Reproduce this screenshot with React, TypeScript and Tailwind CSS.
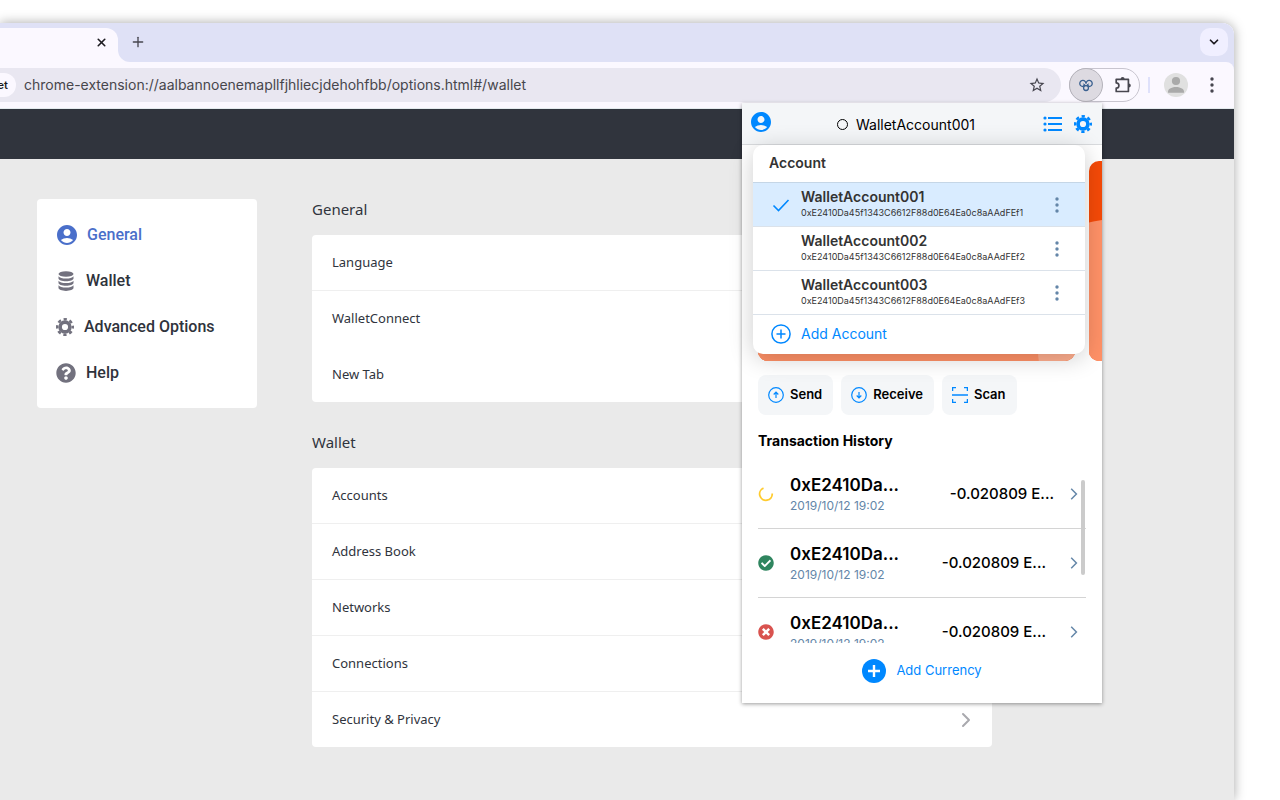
import React from "react";
import { ChevronDown, ChevronRight, Plus, X } from "lucide-react";
import { MdAccountCircle, MdStarOutline } from "react-icons/md";
import { FaCheckCircle, FaQuestionCircle, FaTimesCircle } from "react-icons/fa";

const Gear = () => (
  <svg viewBox="0 0 18 18" className="size-[18px]" fill="none" stroke="currentColor" aria-hidden="true">
    <circle cx="9" cy="9" r="4.9" strokeWidth="3.6" />
    <circle cx="9" cy="9" r="7.8" strokeWidth="2.4" strokeDasharray="3.3 2.826" strokeDashoffset="1.65" />
  </svg>
);

const Coins = () => (
  <svg viewBox="0 0 20 20" className="size-5" fill="currentColor" aria-hidden="true">
    <ellipse cx="10" cy="3" rx="7.5" ry="2.8" />
    <path d="M2.500 5.200c1 1.500 4 2.300 7.500 2.300s6.500-.8 7.500-2.300v2.300c0 1.600-3.300 2.800-7.500 2.800s-7.500-1.200-7.500-2.800z" />
    <path d="M2.500 9.700c1 1.500 4 2.300 7.500 2.300s6.500-.8 7.500-2.300v2.200c0 1.600-3.300 2.800-7.500 2.800s-7.500-1.200-7.500-2.800z" />
    <path d="M2.500 14.200c1 1.500 4 2.300 7.500 2.300s6.500-.8 7.500-2.300v2.900c0 1.600-3.300 2.800-7.500 2.800s-7.500-1.200-7.500-2.800z" />
  </svg>
);

const Dots = ({ className }: { className: string }) => (
  <svg viewBox="0 0 4 16" className={className} fill="currentColor" aria-hidden="true">
    <circle cx="2" cy="2" r="1.7" />
    <circle cx="2" cy="8" r="1.7" />
    <circle cx="2" cy="14" r="1.7" />
  </svg>
);

const menu = [
  { label: "General", icon: <MdAccountCircle size={24} className="-mr-0.5 -ml-px" />, active: true },
  { label: "Wallet", icon: <Coins /> },
  { label: "Advanced Options", icon: <Gear /> },
  { label: "Help", icon: <FaQuestionCircle size={20} /> },
];

const accounts = [
  { name: "WalletAccount001", address: "0xE2410Da45f1343C6612F88d0E64Ea0c8aAAdFEf1", selected: true },
  { name: "WalletAccount002", address: "0xE2410Da45f1343C6612F88d0E64Ea0c8aAAdFEf2" },
  { name: "WalletAccount003", address: "0xE2410Da45f1343C6612F88d0E64Ea0c8aAAdFEf3" },
];

const transactions = ["pending", "success", "failed"];

const CardArt = () => (
  <svg viewBox="0 0 317 200" className="h-[200px] w-[317px] shrink-0 rounded-[10px]" aria-hidden="true">
    <rect width="317" height="200" fill="#f54a08" />
    <circle cx="40" cy="240" r="183" fill="#ff9167" />
    <rect y="150" width="317" height="50" fill="#ff9167" />
    <circle cx="340" cy="190" r="60" fill="#ffae8e" />
  </svg>
);

const TabStrip = () => (
  <div className="flex h-[39px] items-stretch bg-[#dfe1f6]">
    <div className="mt-[5px] flex w-[118px] items-center justify-end rounded-tr-xl bg-[#fbf8ff] pr-2.5 pb-1.5">
      <button aria-label="Close tab" className="text-[#1d1b20]">
        <X size={13} strokeWidth={3} />
      </button>
    </div>
    <div className="flex flex-1 bg-[#fbf8ff]">
      <div className="flex flex-1 items-center justify-between rounded-bl-xl bg-[#dfe1f6] pr-1.5 pb-0.5 pl-3">
        <button aria-label="New tab" className="text-[#47464f]">
          <Plus size={16} strokeWidth={2} />
        </button>
        <button
          aria-label="Search tabs"
          className="flex size-7 items-center justify-center rounded-[10px] bg-[#f0efff] text-[#1d1b20]"
        >
          <ChevronDown size={14} strokeWidth={3} />
        </button>
      </div>
    </div>
  </div>
);

const Toolbar = () => (
  <div className="bg-[#dfe1f6]">
    <div className="flex h-[47px] items-center rounded-tr-lg border-b border-[#e4ebee] bg-[#fbf8ff] pr-5">
      <div className="flex h-[34px] flex-1 items-center rounded-r-full bg-[#e9e7f1] pr-[15px]">
        <span className="flex h-6 w-4 items-center justify-end rounded-r-full bg-[#fbf8ff] pr-2 font-['Inter'] text-[11px] font-semibold text-[#1d1b20]">
          et
        </span>
        <input
          aria-label="Address bar"
          readOnly
          value="chrome-extension://aalbannoenemapllfjhliecjdehohfbb/options.html#/wallet"
          className="ml-2 flex-1 bg-transparent font-['Inter'] text-sm text-[#47464c] outline-none"
        />
        <button aria-label="Bookmark" className="text-[#47464f]">
          <MdStarOutline size={18} />
        </button>
      </div>
      <div className="ml-2 flex h-[34px] w-[71px] items-center rounded-full border border-[#c8c5cf]">
        <button
          aria-label="Wallet extension"
          className="-ml-px flex size-[34px] items-center justify-center rounded-full border border-[#b5b3bb] bg-[#dddae1]"
        >
          <svg viewBox="0 0 16 14" className="h-[13px] w-[14px]" fill="none" stroke="#3b6190" strokeWidth="1.5">
            <path d="M7.900 4.800A3.500 3.500 0 1 0 4.400 8.200L7 6" />
            <path d="M8.100 4.800A3.500 3.500 0 1 1 11.600 8.200L9 6" />
            <circle cx="8" cy="9.900" r="2.800" />
            <path d="M4.500 4.900L8 7.500l3.500-2.600" strokeWidth="1" />
          </svg>
        </button>
        <button aria-label="Extensions" className="flex flex-1 items-center justify-center pl-1 text-[#47464f]">
          <svg viewBox="0 0 18 18" className="size-[18px]" fill="none" stroke="currentColor" strokeWidth="1.700">
            <path d="M2.200 3.300h12.200v12.200H2.200v-3.300a2.700 2.700 0 0 0 0-5.400z" strokeLinejoin="round" />
            <path d="M6.600 3a2 2 0 0 1 4 0zM14.800 7.600a2 2 0 0 1 0 4z" fill="currentColor" stroke="none" />
          </svg>
        </button>
      </div>
      <span className="ml-2 h-4 w-0.5 bg-[#dfe1fb]" />
      <button aria-label="Profile" className="ml-3.5">
        <svg viewBox="0 0 24 24" className="size-6">
          <circle cx="12" cy="12" r="12" fill="#e0e0e0" />
          <circle cx="12" cy="8" r="4.1" fill="#aaa" />
          <path d="M4 19.8v-1.2c0-3.2 4.5-4.7 8-4.7s8 1.5 8 4.7v1.2z" fill="#aaa" />
        </svg>
      </button>
      <button aria-label="Browser menu" className="ml-[22px] text-[#47464f]">
        <Dots className="h-4 w-1" />
      </button>
    </div>
  </div>
);

const Sidebar = () => (
  <nav className="flex h-[209px] w-[220px] shrink-0 flex-col rounded bg-white pt-[13px] pl-[19px] font-['Roboto'] text-base font-medium">
    {menu.map((item) => (
      <a
        key={item.label}
        href="#"
        className={`flex h-[46px] items-center gap-2.5 ${item.active ? "text-[#4a6fca]" : "text-[#2f333c]"}`}
      >
        <span className={item.active ? "" : "text-[#72717e]"}>{item.icon}</span>
        {item.label}
      </a>
    ))}
  </nav>
);

const Section = ({ title, rows }: { title: string; rows: string[] }) => (
  <section>
    <h2 className="text-[15px] leading-5">{title}</h2>
    <ul className="mt-4 rounded bg-white text-[13px]">
      {rows.map((row) => (
        <li key={row} className={row === "WalletConnect" ? "" : "border-b border-[#efefef] last:border-b-0"}>
          <a href="#" className={`flex items-center justify-between px-5 ${row === "WalletConnect" ? "h-14" : "h-[55px]"}`}>
            {row}
            <ChevronRight size={24} className="-mr-1.5 text-[#a9a9ae]" />
          </a>
        </li>
      ))}
    </ul>
  </section>
);

const AccountMenu = () => (
  <div className="absolute top-[42px] right-[17px] left-[11px] overflow-hidden rounded-[10px] bg-white text-[#333] shadow-[0_4px_24px_rgba(0,0,0,0.2)]">
    <h3 className="flex h-[37px] items-center px-4 pb-0.5 text-sm font-semibold">Account</h3>
    {accounts.map((account) => (
      <div
        key={account.address}
        className={`flex h-11 items-center border-t pr-[26px] pl-4 ${
          account.selected ? "border-[#c5d6e6] bg-[#d9ecff]" : "border-[#dbe2ea]"
        }`}
      >
        <span className="w-8">
          {account.selected && (
            <svg viewBox="0 0 24 24" className="size-6" fill="none" stroke="#0088ff" strokeWidth="1.6">
              <path d="M4.5 12.5l5 5L19.500 7" />
            </svg>
          )}
        </span>
        <button className="flex-1 text-left">
          <span className="block text-sm leading-4 font-semibold">{account.name}</span>
          <span className="block text-[9px] leading-4">{account.address}</span>
        </button>
        <button aria-label={`${account.name} options`} className="text-[#6486a8]">
          <Dots className="h-4 w-1" />
        </button>
      </div>
    ))}
    <button className="flex h-10 w-full items-center border-t border-[#dbe2ea] pb-0.5 pl-[18px] text-sm text-[#0088ff]">
      <svg viewBox="0 0 20 20" className="mr-2.5 size-5" fill="none" stroke="currentColor" strokeWidth="1.5">
        <circle cx="10" cy="10" r="9.1" />
        <path d="M10 5.500v9M5.500 10h9" />
      </svg>
      Add Account
    </button>
  </div>
);

const StatusIcon = ({ status }: { status: string }) => {
  if (status === "success") return <FaCheckCircle size={16} className="text-[#2f855f]" />;
  if (status === "failed") return <FaTimesCircle size={16} className="text-[#d9534f]" />;
  return (
    <svg viewBox="0 0 16 16" className="size-4" fill="none" stroke="#ffcb2e" strokeWidth="1.8">
      <path d="M5.500 2.200A6.300 6.300 0 1 0 14.200 7.500" />
    </svg>
  );
};

const actionClass = "flex h-10 items-center gap-1.5 rounded-lg bg-[#f4f6f8] pr-[11px] pl-2.5";

const WalletPopup = () => (
  <div className="absolute top-20 right-[132px] w-[360px] bg-white pb-5 font-['Inter'] text-black shadow-[0_1px_4px_rgba(0,0,0,0.4)]">
    <header className="flex h-[42px] items-center border-b border-[#d9dbde] bg-[#f4f6f8] px-2 text-[#0088ff]">
      <button aria-label="Profile" className="pb-1">
        <MdAccountCircle size={24} className="-ml-px" />
      </button>
      <button className="flex flex-1 items-center justify-center gap-2 pt-0.5 pr-1 text-sm text-black">
        <span className="size-[11px] rounded-full border border-black" />
        WalletAccount001
      </button>
      <button aria-label="List" className="mr-[11px]">
        <svg viewBox="0 0 20 16" className="h-4 w-5" fill="currentColor">
          <circle cx="2" cy="2" r="1.6" />
          <circle cx="2" cy="8" r="1.6" />
          <circle cx="2" cy="14" r="1.6" />
          <path d="M5 1h14v2H5zM5 7h14v2H5zM5 13h14v2H5z" />
        </svg>
      </button>
      <button aria-label="Settings" className="mr-0.5">
        <Gear />
      </button>
    </header>
    <div className="flex gap-3.5 overflow-hidden pt-4 pl-4">
      <CardArt />
      <CardArt />
    </div>
    <AccountMenu />
    <div className="flex gap-2 px-4 pt-3.5 text-[13px] font-semibold">
      <button className={actionClass}>
        <svg viewBox="0 0 16 16" className="size-4" fill="none" stroke="#0088ff" strokeWidth="1.2">
          <circle cx="8" cy="8" r="7.3" />
          <path d="M8 11V5.200M5.700 7.500L8 5.200l2.300 2.300" />
        </svg>
        Send
      </button>
      <button className={actionClass}>
        <svg viewBox="0 0 16 16" className="size-4" fill="none" stroke="#0088ff" strokeWidth="1.2">
          <circle cx="8" cy="8" r="7.3" />
          <path d="M8 5v5.800M5.700 8.500L8 10.800l2.300-2.300" />
        </svg>
        Receive
      </button>
      <button className={actionClass}>
        <svg viewBox="0 0 16 16" className="size-4" fill="none" stroke="#0088ff" strokeWidth="1.3">
          <path d="M.6 4V.6H4M12 .6h3.400V4M15.400 12v3.400H12M4 15.400H.6V12M0 8h16" />
        </svg>
        Scan
      </button>
    </div>
    <h3 className="mt-4 px-4 text-sm leading-5 font-bold">Transaction History</h3>
    <div className="relative mt-[9px] h-[183px] overflow-hidden px-4">
      {transactions.map((status) => (
        <div key={status} className="flex h-[69px] items-center border-b border-[#d4d4d4]">
          <StatusIcon status={status} />
          <div className="ml-4 flex-1">
            <p className="text-[17px] leading-6 font-semibold">0xE2410Da...</p>
            <p className="text-xs leading-[18px] text-[#6486a8]">2019/10/12 19:02</p>
          </div>
          <span className={`text-[15px] font-medium ${status === "pending" ? "mr-3" : "mr-5"}`}>-0.020809 E...</span>
          <svg viewBox="0 0 16 16" className="size-4" fill="none" stroke="#6486a8" strokeWidth="1.5">
            <path d="M5.200 2.800L10.400 8l-5.200 5.200" />
          </svg>
          <span className="w-1" />
        </div>
      ))}
      <span className="absolute top-5 right-[17px] h-[95px] w-1 rounded-full bg-[#cbcbcb]" />
    </div>
    <button className="mx-auto mt-4 flex items-center gap-2.5 text-[13px] text-[#0088ff]">
      <svg viewBox="0 0 24 24" className="size-6">
        <circle cx="12" cy="12" r="12" fill="#0088ff" />
        <path d="M12 6v12M6 12h12" stroke="white" strokeWidth="2.4" />
      </svg>
      Add Currency
    </button>
  </div>
);

export default function App() {
  return (
    <div className="flex min-h-screen flex-col overflow-hidden bg-white pt-[23px] pr-[46px]">
      <div className="relative flex flex-1 flex-col rounded-tr-xl shadow-[0_0_12px_rgba(0,0,0,0.35)]">
        <div className="overflow-hidden rounded-tr-xl">
          <TabStrip />
          <Toolbar />
        </div>
        <div className="h-[50px] bg-[#30343d]" />
        <main className="flex flex-1 items-start gap-[55px] bg-[#eaeaea] pt-10 pb-[52px] pl-[37px] font-['Noto_Sans'] text-[#30343d]">
          <Sidebar />
          <div className="flex w-[680px] flex-col gap-[30px]">
            <Section title="General" rows={["Language", "WalletConnect", "New Tab"]} />
            <Section title="Wallet" rows={["Accounts", "Address Book", "Networks", "Connections", "Security & Privacy"]} />
          </div>
        </main>
        <WalletPopup />
      </div>
    </div>
  );
}
